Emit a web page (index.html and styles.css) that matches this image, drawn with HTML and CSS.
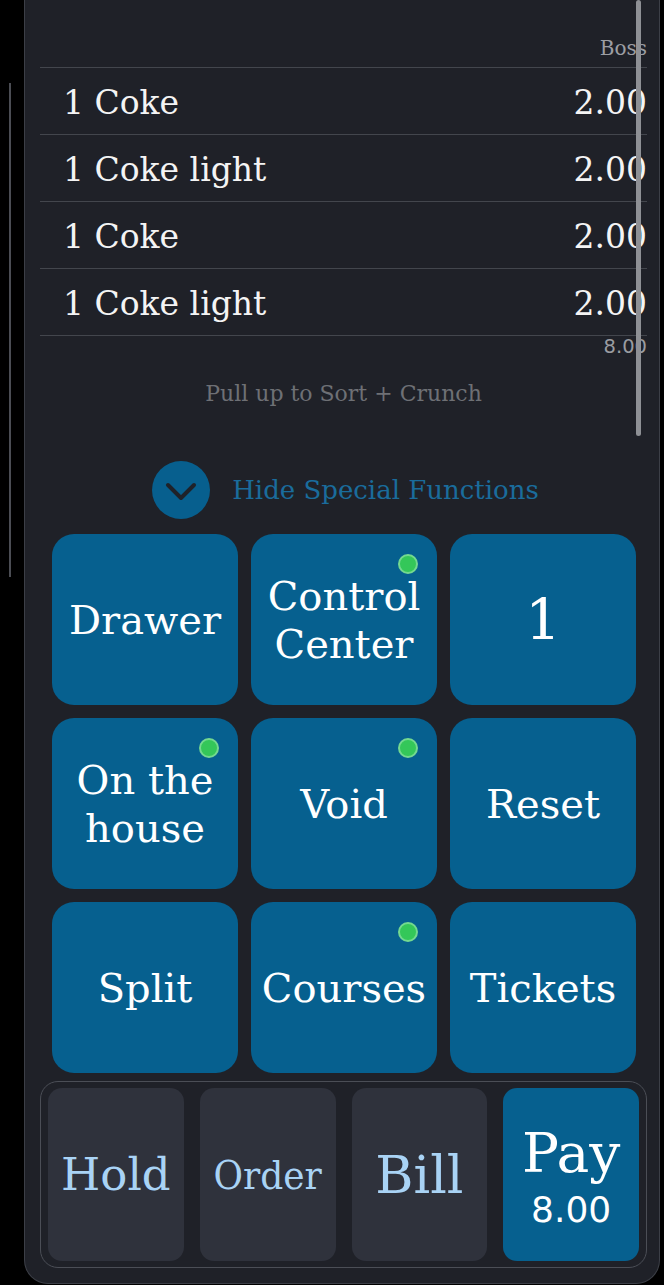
FILE: index.html
```html
<!DOCTYPE html>
<html>
<head>
<meta charset="utf-8">
<link rel="stylesheet" href="styles.css">
</head>
<body>
<div class="screen">
  <div class="edge"><div class="edge-line"></div></div>
  <div class="panel">
    <div class="scrollbar"></div>
    <div class="receipt">
      <div class="receipt-head">Boss</div>
      <div class="item"><span>1 Coke</span><span>2.00</span></div>
      <div class="item"><span>1 Coke light</span><span>2.00</span></div>
      <div class="item"><span>1 Coke</span><span>2.00</span></div>
      <div class="item"><span>1 Coke light</span><span>2.00</span></div>
      <div class="total">8.00</div>
    </div>
    <div class="pull">Pull up to Sort + Crunch</div>
    <div class="toggle">
      <div class="toggle-circle">
        <svg width="32" height="20" viewBox="0 0 32 20"><path d="M3 3 L16 16 L29 3" fill="none" stroke="#1f2229" stroke-width="4" stroke-linecap="round" stroke-linejoin="round"/></svg>
      </div>
      <span class="toggle-label">Hide Special Functions</span>
    </div>
    <div class="grid">
      <div class="fn">Drawer</div>
      <div class="fn">Control<br>Center<span class="dot"></span></div>
      <div class="fn fn-num">1</div>
      <div class="fn">On the<br>house<span class="dot"></span></div>
      <div class="fn">Void<span class="dot"></span></div>
      <div class="fn">Reset</div>
      <div class="fn">Split</div>
      <div class="fn">Courses<span class="dot"></span></div>
      <div class="fn">Tickets</div>
    </div>
    <div class="actions">
      <div class="act act-hold">Hold</div>
      <div class="act act-order">Order</div>
      <div class="act act-bill">Bill</div>
      <div class="act act-pay"><span class="pay-label">Pay</span><span class="pay-amount">8.00</span></div>
    </div>
  </div>
</div>
</body>
</html>
```

FILE: styles.css
```css
* { box-sizing: border-box; }
html, body { margin: 0; padding: 0; background: #000; }
body { width: 664px; height: 1285px; overflow: hidden; font-family: "DejaVu Serif", "Liberation Serif", serif; }

.screen { display: flex; align-items: flex-start; }

.edge { width: 24px; flex: none; padding: 83px 0 0 9px; }
.edge-line { width: 2px; height: 494px; background: #4b4d54; }

.panel {
  position: relative;
  width: 636px;
  flex: none;
  background: #1f2128;
  border: 1px solid #3c3f47;
  border-top: none;
  border-radius: 0 0 24px 24px;
  padding: 0 12px 15px 15px;
}

.scrollbar {
  position: absolute;
  left: 611px;
  top: 0;
  width: 5px;
  height: 436px;
  background: #8e9095;
  border-radius: 3px;
}

.receipt-head {
  height: 68px;
  border-bottom: 1px solid #43464d;
  text-align: right;
  color: #9c9ea3;
  font-size: 20px;
  line-height: 24px;
  padding-top: 36px;
}

.item {
  height: 67px;
  border-bottom: 1px solid #43464d;
  display: flex;
  justify-content: space-between;
  align-items: center;
  padding-left: 23px;
  padding-top: 3px;
  color: #f4f4f4;
  font-size: 33px;
  line-height: 38px;
}

.total {
  text-align: right;
  color: #9a9ca1;
  font-family: "DejaVu Sans", sans-serif;
  font-size: 19.5px;
  line-height: 22px;
}

.pull {
  margin-top: 23px;
  text-align: center;
  color: #6e7075;
  font-size: 22px;
  line-height: 26px;
}

.toggle {
  margin-top: 54px;
  height: 58px;
  display: flex;
  align-items: center;
  justify-content: center;
  gap: 22px;
  padding-left: 4px;
}
.toggle-circle {
  width: 58px;
  height: 58px;
  border-radius: 50%;
  background: #075f8e;
  display: flex;
  align-items: center;
  justify-content: center;
  padding-top: 4px;
}
.toggle-label {
  color: #1a6c9c;
  font-size: 26px;
  line-height: 30px;
}

.grid {
  margin: 15px 0 0 12px;
  width: 584px;
  display: grid;
  grid-template-columns: 186px 186px 186px;
  grid-auto-rows: 171px;
  gap: 13px;
}
.fn {
  position: relative;
  background: #06608f;
  border-radius: 22px;
  display: flex;
  align-items: center;
  justify-content: center;
  text-align: center;
  color: #fff;
  font-size: 40px;
  line-height: 48px;
}
.fn-num { font-size: 56px; }
.dot {
  position: absolute;
  top: 20px;
  right: 19px;
  width: 20px;
  height: 20px;
  border-radius: 50%;
  background: #34c759;
  border: 2px solid #74d98f;
}

.actions {
  margin-top: 8px;
  height: 187px;
  border: 1.5px solid #4b4e56;
  border-radius: 18px;
  padding: 6px 7px;
  display: flex;
  gap: 16px;
}
.act {
  flex: 1;
  background: #2f323c;
  border-radius: 14px;
  display: flex;
  align-items: center;
  justify-content: center;
  color: #a9d3f5;
}
.act-hold { font-size: 45px; }
.act-order { font-family: "DejaVu Serif Condensed", "DejaVu Serif", serif; font-stretch: condensed; font-size: 40px; }
.act-bill { font-size: 52px; }
.act-pay {
  background: #06608f;
  flex-direction: column;
  color: #fff;
  padding-top: 4px;
}
.pay-label { font-size: 55px; line-height: 62px; }
.pay-amount { font-family: "DejaVu Sans", sans-serif; font-size: 36px; line-height: 44px; margin-top: 4px; }
```
